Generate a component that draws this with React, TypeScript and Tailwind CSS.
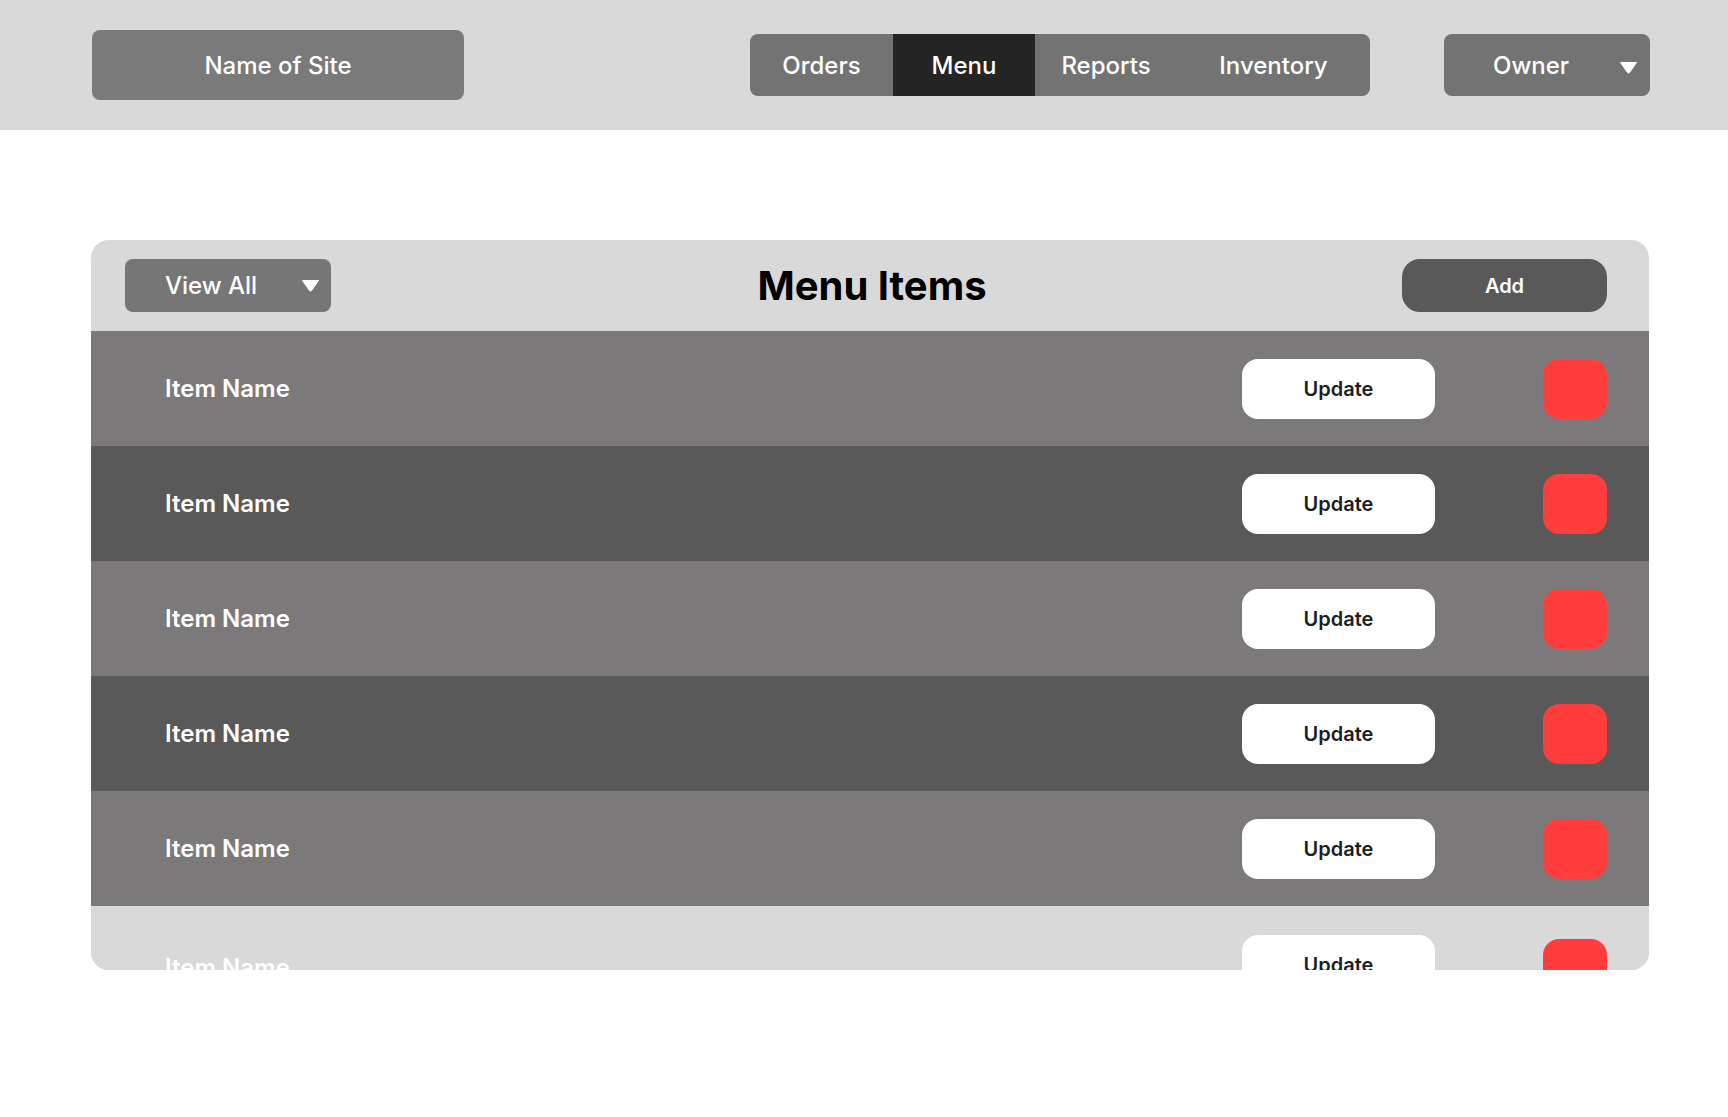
const font = { fontFamily: 'Inter, "Noto Sans", sans-serif' };

function Caret({ className }: { className?: string }) {
  return (
    <svg className={className} width="19" height="13" viewBox="0 0 19 13" fill="none">
      <path d="M1.5 1.5h16L10.7 11.3a1.5 1.5 0 0 1-2.4 0z" fill="#ffffff" stroke="#ffffff" strokeWidth="1" strokeLinejoin="round" />
    </svg>
  );
}

const tabs = [
  { label: 'Orders', w: 'w-[143px]' },
  { label: 'Menu', w: 'w-[142px]', active: true },
  { label: 'Reports', w: 'w-[142px]' },
  { label: 'Inventory', w: 'w-[193px]' },
];

const rows = [
  'bg-[#7b797a]',
  'bg-[#595959]',
  'bg-[#7b797a]',
  'bg-[#595959]',
  'bg-[#7b797a]',
  'bg-[#d9d9d9]',
];

export default function App() {
  return (
    <div className="min-h-screen bg-white" style={font}>
      {/* Header */}
      <header className="h-[130px] bg-[#d9d9d9]">
        <div className="ml-[92px] w-[1558px] h-full flex items-center">
          <div className="w-[372px] h-[70px] rounded-lg bg-[#7a7a7a] flex items-center justify-center pt-[2px] text-white text-[24px] font-medium">
            Name of Site
          </div>
          <nav className="ml-auto h-[62px] rounded-lg overflow-hidden bg-[#737373] flex">
            {tabs.map((t) => (
              <button
                key={t.label}
                className={`${t.w} h-full flex items-center justify-center pt-[2px] text-white text-[24px] font-medium ${t.active ? 'bg-[#242424]' : ''}`}
              >
                {t.label}
              </button>
            ))}
          </nav>
          <button className="ml-[74px] w-[206px] h-[62px] rounded-lg bg-[#737373] flex items-center pl-[49px] pr-[12px] pt-[2px] text-white text-[24px] font-medium">
            <span>Owner</span>
            <Caret className="ml-auto mt-[2px]" />
          </button>
        </div>
      </header>

      <main className="ml-[91px] w-[1558px] pt-[110px]">
        {/* Card */}
        <div className="h-[730px] rounded-[18px] overflow-hidden bg-[#d9d9d9]">
          <div className="h-[91px] grid grid-cols-[1fr_auto_1fr] items-center pl-[34px] pr-[30px]">
            <button className="w-[206px] h-[53px] rounded-lg bg-[#767676] flex items-center pl-[40px] pr-[11px] text-white text-[24px] font-medium">
              <span>View All</span>
              <Caret className="ml-auto" />
            </button>
            <h1 className="text-[40px] font-bold text-black">Menu Items</h1>
            <div className="flex justify-end pr-[12px]">
              <button className="w-[205px] h-[53px] rounded-[18px] bg-[#595959] text-white text-[20px] font-semibold">
                Add
              </button>
            </div>
          </div>

          {rows.map((bg, i) => {
            const last = i === rows.length - 1;
            return (
              <div key={i} className={`${bg} h-[115px] flex items-center pl-[74px] pr-[42px]`}>
                <span className={`flex-1 text-white text-[24px] font-semibold ${last ? 'mt-[9px]' : ''}`}>Item Name</span>
                <button className={`w-[193px] h-[60px] rounded-[16px] bg-white text-[#1e1e1e] text-[20px] font-semibold ${last ? 'mt-[3px]' : ''}`}>
                  Update
                </button>
                <button className={`ml-[108px] w-[64px] h-[60px] rounded-[16px] bg-[#ff3d3d] ${last ? 'mt-[11px]' : ''}`} />
              </div>
            );
          })}
        </div>
      </main>
    </div>
  );
}
